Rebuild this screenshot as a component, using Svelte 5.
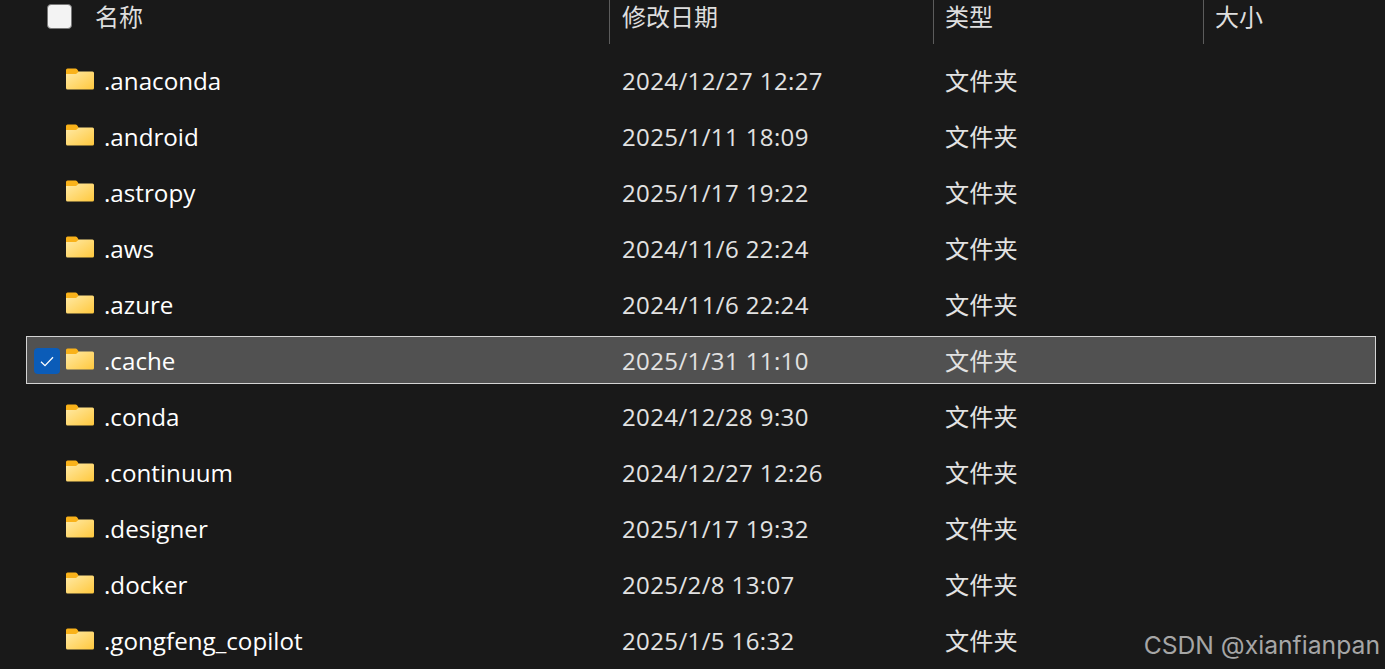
<script>
  const files = [
    { name: '.anaconda', date: '2024/12/27 12:27' },
    { name: '.android', date: '2025/1/11 18:09' },
    { name: '.astropy', date: '2025/1/17 19:22' },
    { name: '.aws', date: '2024/11/6 22:24' },
    { name: '.azure', date: '2024/11/6 22:24' },
    { name: '.cache', date: '2025/1/31 11:10', selected: true },
    { name: '.conda', date: '2024/12/28 9:30' },
    { name: '.continuum', date: '2024/12/27 12:26' },
    { name: '.designer', date: '2025/1/17 19:32' },
    { name: '.docker', date: '2025/2/8 13:07' },
    { name: '.gongfeng_copilot', date: '2025/1/5 16:32' }
  ];
</script>

<div class="explorer">
  <div class="header">
    <div class="col name-col">
      <span class="checkbox"></span>
      <span>名称</span>
    </div>
    <div class="col">修改日期</div>
    <div class="col tight">类型</div>
    <div class="col tight">大小</div>
  </div>

  <div class="rows">
    {#each files as file}
      <div class="row" class:selected={file.selected}>
        <div class="cell name-cell">
          {#if file.selected}
            <span class="tick">
              <svg width="14" height="11" viewBox="0 0 14 11">
                <path d="M1 5.8 L5 9.6 L13 1.2" fill="none" stroke="#fff" stroke-width="1.3" />
              </svg>
            </span>
          {/if}
          <svg class="folder" width="28" height="22" viewBox="0 0 28 22">
            <defs>
              <linearGradient id={'body' + file.name} x1="0" y1="0" x2="1" y2="1">
                <stop offset="0" stop-color="#ffeaa6" />
                <stop offset="1" stop-color="#ffc83d" />
              </linearGradient>
            </defs>
            <path d="M0 2 a1.5 1.5 0 0 1 1.5 -1.5 h8 a2 2 0 0 1 1.6 .8 L13 4 v3 H0 Z" fill="#f9b21a" />
            <path d="M0 6 H10 L13 3.6 H26.5 a1.5 1.5 0 0 1 1.5 1.5 V20 a1.5 1.5 0 0 1 -1.5 1.5 H1.5 A1.5 1.5 0 0 1 0 20 Z" fill={'url(#body' + file.name + ')'} />
          </svg>
          <span class="fname">{file.name}</span>
        </div>
        <div class="cell date">{file.date}</div>
        <div class="cell type">文件夹</div>
        <div class="cell"></div>
      </div>
    {/each}
  </div>

  <div class="watermark">CSDN @xianfianpan</div>
</div>

<style>
  :global(body) {
    margin: 0;
    background: #191919;
    overflow: hidden;
  }

  .explorer {
    position: relative;
    width: 1385px;
    height: 669px;
    overflow: hidden;
    background: #191919;
    color: #fff;
    font-family: "Open Sans", "Noto Sans CJK SC", sans-serif;
    font-size: 24px;
  }

  .header {
    display: grid;
    grid-template-columns: 609px 324px 270px 1fr;
    height: 44px;
    color: #dedede;
  }

  .col {
    display: flex;
    align-items: center;
    height: 30px;
    padding-left: 12px;
    padding-bottom: 14px;
    border-left: 1px solid #5c5c5c;
    font-size: 24px;
  }

  .col.tight {
    padding-left: 11px;
  }

  .name-col {
    border-left: none;
    padding-left: 47px;
    gap: 23px;
  }

  .checkbox {
    width: 23px;
    height: 23px;
    margin-top: 2px;
    border-radius: 4px;
    background: #f3f3f3;
    border: 1px solid #777;
  }

  .rows {
    display: flex;
    flex-direction: column;
    gap: 8px;
    padding: 12px 9px 0 26px;
  }

  .row {
    display: grid;
    grid-template-columns: 583px 324px 270px 1fr;
    height: 48px;
    box-sizing: border-box;
    border: 1px solid transparent;
  }

  .row.selected {
    background: #515151;
    border-color: #d4d4d4;
  }

  .cell {
    display: flex;
    align-items: center;
    box-sizing: border-box;
    padding-left: 12px;
    white-space: nowrap;
  }

  .date {
    color: #e2e2e2;
    letter-spacing: 0.38px;
  }

  .type {
    color: #e2e2e2;
    padding-left: 11px;
    padding-bottom: 2px;
    font-size: 24.2px;
  }

  .name-cell {
    position: relative;
    padding-left: 39px;
    gap: 10px;
    font-size: 24.2px;
  }

  .tick {
    position: absolute;
    left: 7px;
    top: 11px;
    width: 26px;
    height: 26px;
    border-radius: 4px;
    background: #0b5cb8;
    display: flex;
    align-items: center;
    justify-content: center;
  }

  .folder {
    margin-top: -2px;
  }

  .watermark {
    position: absolute;
    right: 5px;
    top: 630px;
    font-family: Inter, "Liberation Sans", sans-serif;
    font-size: 24.7px;
    color: #a6a6a6;
  }
</style>
